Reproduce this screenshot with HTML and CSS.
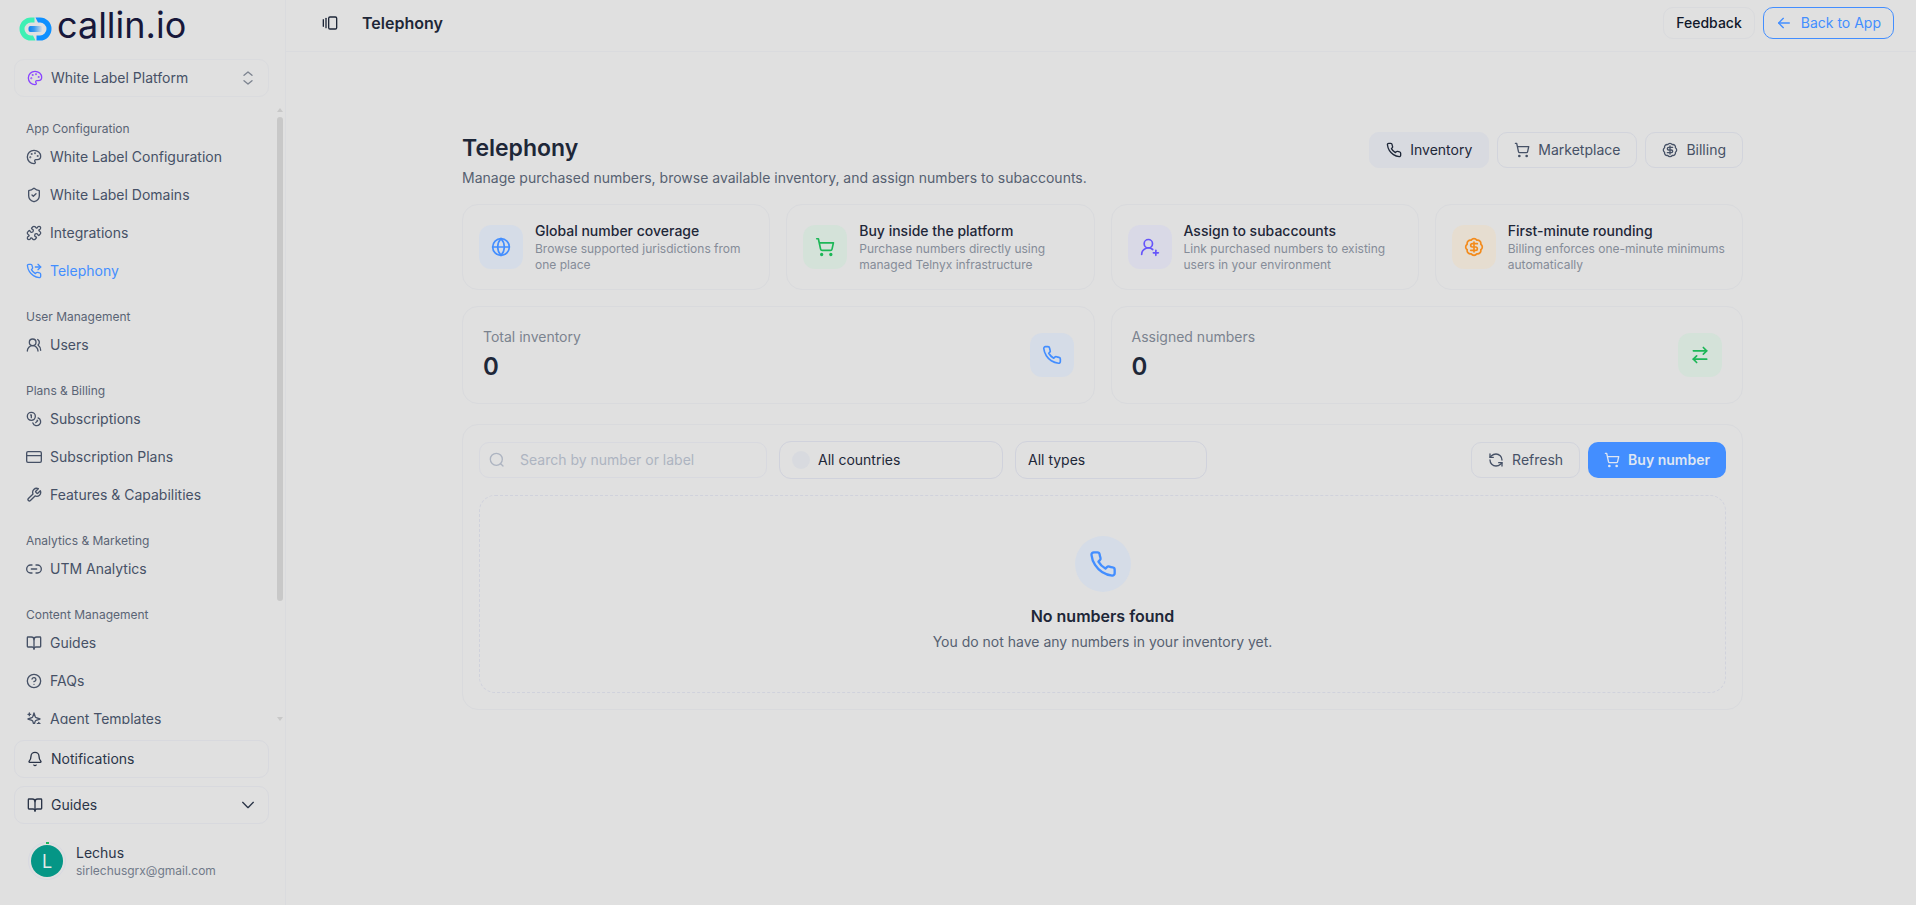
FILE: index.html
```html
<!DOCTYPE html>
<html lang="en">
<head>
    <meta charset="UTF-8">
    <meta name="viewport" content="width=device-width, initial-scale=1.0">
    <title>Telephony - callin.io</title>
    <link rel="stylesheet" href="styles.css">
</head>
<body>

<!-- Icon set -->
<svg class="sprite" aria-hidden="true">
    <symbol id="i-palette" viewBox="0 0 24 24"><path d="M12 22a1 1 0 0 1 0-20 10 9 0 0 1 10 9 5 5 0 0 1-5 5h-2.25a1.75 1.75 0 0 0-1.4 2.8l.3.4a1.75 1.75 0 0 1-1.4 2.8z"/><circle cx="13.5" cy="6.5" r=".5"/><circle cx="17.5" cy="10.5" r=".5"/><circle cx="6.5" cy="12.5" r=".5"/><circle cx="8.5" cy="7.5" r=".5"/></symbol>
    <symbol id="i-updown" viewBox="0 0 24 24"><path d="m6 16 6 5 6-5"/><path d="m6 8 6-5 6 5"/></symbol>
    <symbol id="i-shield" viewBox="0 0 24 24"><path d="M20 13c0 5-3.5 7.5-7.66 8.95a1 1 0 0 1-.67-.01C7.5 20.5 4 18 4 13V6a1 1 0 0 1 1-1c2 0 4.5-1.2 6.24-2.72a1.17 1.17 0 0 1 1.52 0C14.51 3.81 17 5 19 5a1 1 0 0 1 1 1z"/><path d="m9 12 2 2 4-4"/></symbol>
    <symbol id="i-puzzle" viewBox="0 0 24 24"><path d="M15.39 4.39a1 1 0 0 0 1.68-.474 2.5 2.5 0 1 1 3.014 3.015 1 1 0 0 0-.474 1.68l1.683 1.682a2.414 2.414 0 0 1 0 3.414L19.61 15.39a1 1 0 0 1-1.68-.474 2.5 2.5 0 1 0-3.014 3.015 1 1 0 0 1 .474 1.68l-1.683 1.682a2.414 2.414 0 0 1-3.414 0L8.61 19.61a1 1 0 0 0-1.68.474 2.5 2.5 0 1 1-3.014-3.015 1 1 0 0 0 .474-1.68l-1.683-1.682a2.414 2.414 0 0 1 0-3.414L4.39 8.61a1 1 0 0 1 1.68.474 2.5 2.5 0 1 0 3.014-3.015 1 1 0 0 1-.474-1.68l1.683-1.682a2.414 2.414 0 0 1 3.414 0z"/></symbol>
    <symbol id="i-phone" viewBox="0 0 24 24"><path d="M22 16.92v3a2 2 0 0 1-2.18 2 19.79 19.79 0 0 1-8.63-3.07 19.5 19.5 0 0 1-6-6 19.79 19.79 0 0 1-3.07-8.67A2 2 0 0 1 4.11 2h3a2 2 0 0 1 2 1.72 12.84 12.84 0 0 0 .7 2.81 2 2 0 0 1-.45 2.11L8.09 9.91a16 16 0 0 0 6 6l1.27-1.27a2 2 0 0 1 2.11-.45 12.84 12.84 0 0 0 2.81.7A2 2 0 0 1 22 16.92z"/></symbol>
    <symbol id="i-forward" viewBox="0 0 24 24"><path d="m18 2 4 4-4 4"/><path d="M14 6h8"/><path d="M22 16.92v3a2 2 0 0 1-2.18 2 19.79 19.79 0 0 1-8.63-3.07 19.5 19.5 0 0 1-6-6 19.79 19.79 0 0 1-3.07-8.67A2 2 0 0 1 4.11 2h3a2 2 0 0 1 2 1.72 12.84 12.84 0 0 0 .7 2.81 2 2 0 0 1-.45 2.11L8.09 9.91a16 16 0 0 0 6 6l1.27-1.27a2 2 0 0 1 2.11-.45 12.84 12.84 0 0 0 2.81.7A2 2 0 0 1 22 16.92z"/></symbol>
    <symbol id="i-users" viewBox="0 0 24 24"><path d="M18 21a8 8 0 0 0-16 0"/><circle cx="10" cy="8" r="5"/><path d="M22 20c0-3.37-2-6.5-4-8a5 5 0 0 0-.45-8.3"/></symbol>
    <symbol id="i-coins" viewBox="0 0 24 24"><circle cx="8" cy="8" r="6"/><path d="M18.09 10.37A6 6 0 1 1 10.34 18"/><path d="M7 6h1v4"/><path d="m16.71 13.88.7.71-2.82 2.82"/></symbol>
    <symbol id="i-card" viewBox="0 0 24 24"><rect x="1" y="4" width="22" height="16" rx="2"/><path d="M1 10h22"/></symbol>
    <symbol id="i-wrench" viewBox="0 0 24 24"><path d="M14.7 6.3a1 1 0 0 0 0 1.4l1.6 1.6a1 1 0 0 0 1.4 0l3.77-3.77a6 6 0 0 1-7.94 7.94l-6.91 6.91a2.12 2.12 0 0 1-3-3l6.91-6.91a6 6 0 0 1 7.94-7.94l-3.76 3.76z"/></symbol>
    <symbol id="i-link" viewBox="0 0 24 24"><path d="M9 18H7A5 5 0 0 1 7 6h2"/><path d="M15 6h2a5 5 0 1 1 0 12h-2"/><path d="M8 12h8"/></symbol>
    <symbol id="i-book" viewBox="0 0 24 24"><path d="M12 7v14"/><path d="M3 18a1 1 0 0 1-1-1V4a1 1 0 0 1 1-1h5a4 4 0 0 1 4 4 4 4 0 0 1 4-4h5a1 1 0 0 1 1 1v13a1 1 0 0 1-1 1h-6a3 3 0 0 0-3 3 3 3 0 0 0-3-3z"/></symbol>
    <symbol id="i-help" viewBox="0 0 24 24"><circle cx="12" cy="12" r="10"/><path d="M9.09 9a3 3 0 0 1 5.83 1c0 2-3 3-3 3"/><path d="M12 17h.01"/></symbol>
    <symbol id="i-sparkles" viewBox="0 0 24 24"><path d="m12 3-1.9 5.8a2 2 0 0 1-1.3 1.3L3 12l5.8 1.9a2 2 0 0 1 1.3 1.3L12 21l1.9-5.8a2 2 0 0 1 1.3-1.3L21 12l-5.8-1.9a2 2 0 0 1-1.3-1.3z"/><path d="M5 3v4"/><path d="M19 17v4"/><path d="M3 5h4"/><path d="M17 19h4"/></symbol>
    <symbol id="i-bell" viewBox="0 0 24 24"><path d="M10.27 21a2 2 0 0 0 3.46 0"/><path d="M3.26 15.33A1 1 0 0 0 4 17h16a1 1 0 0 0 .74-1.67C19.41 13.96 18 12.5 18 8A6 6 0 0 0 6 8c0 4.5-1.41 5.96-2.74 7.33"/></symbol>
    <symbol id="i-down" viewBox="0 0 24 24"><path d="m4 8 8 8 8-8"/></symbol>
    <symbol id="i-toggle" viewBox="0 0 24 24"><path d="M2 7v10"/><path d="M6 5v14"/><rect x="10" y="3" width="12" height="18" rx="2"/></symbol>
    <symbol id="i-back" viewBox="0 0 24 24"><path d="m11 19-7-7 7-7"/><path d="M20 12H4"/></symbol>
    <symbol id="i-cart" viewBox="0 0 24 24"><circle cx="8" cy="21" r="1"/><circle cx="19" cy="21" r="1"/><path d="M2.05 2.05h2l2.66 12.42a2 2 0 0 0 2 1.58h9.78a2 2 0 0 0 1.95-1.57l1.65-7.43H5.12"/></symbol>
    <symbol id="i-dollar" viewBox="0 0 24 24"><path d="M3.85 8.62a4 4 0 0 1 4.78-4.77 4 4 0 0 1 6.74 0 4 4 0 0 1 4.78 4.78 4 4 0 0 1 0 6.74 4 4 0 0 1-4.77 4.78 4 4 0 0 1-6.75 0 4 4 0 0 1-4.78-4.77 4 4 0 0 1 0-6.76z"/><path d="M16 8h-6a2 2 0 1 0 0 4h4a2 2 0 1 1 0 4H8"/><path d="M12 18V6"/></symbol>
    <symbol id="i-globe" viewBox="0 0 24 24"><circle cx="12" cy="12" r="10"/><path d="M12 2a14.5 14.5 0 0 0 0 20 14.5 14.5 0 0 0 0-20"/><path d="M2 12h20"/></symbol>
    <symbol id="i-userplus" viewBox="0 0 24 24"><path d="M2 21a8 8 0 0 1 13.29-6"/><circle cx="10" cy="8" r="5"/><path d="M19 16v6"/><path d="M22 19h-6"/></symbol>
    <symbol id="i-swap" viewBox="0 0 24 24"><path d="m16 3 4 4-4 4"/><path d="M20 7H4"/><path d="m8 21-4-4 4-4"/><path d="M4 17h16"/></symbol>
    <symbol id="i-search" viewBox="0 0 24 24"><circle cx="11" cy="11" r="9"/><path d="m21 21-3.5-3.5"/></symbol>
    <symbol id="i-refresh" viewBox="0 0 24 24"><path d="M21 12a9 9 0 0 0-9-9 9.75 9.75 0 0 0-6.74 2.74L3 8"/><path d="M3 3v5h5"/><path d="M3 12a9 9 0 0 0 9 9 9.75 9.75 0 0 0 6.74-2.74L21 16"/><path d="M16 16h5v5"/></symbol>
</svg>

<div class="app">
    <aside class="sidebar">
        <a class="logo" href="#">
            <svg class="logo-mark" viewBox="0 0 32 24" aria-hidden="true">
                <defs>
                    <linearGradient id="bar" x1="0" x2="1">
                        <stop offset="0" stop-color="#0b84f0"/>
                        <stop offset=".4" stop-color="#3a9af0"/>
                        <stop offset="1" stop-color="#dce0e4"/>
                    </linearGradient>
                </defs>
                <path d="M15 .5h-3.500a11.500 11.500 0 0 0 0 23H16l-2.500-5h-2a6.500 6.500 0 0 1 0-13H15z" fill="#3ef0b4"/>
                <path d="M16 .5h4.500a11.500 11.500 0 0 1 0 23H17v-5h3.500a6.500 6.500 0 0 0 0-13h-2z" fill="#0e90ff"/>
                <rect x="9" y="9" width="14" height="6" rx="2" fill="url(#bar)"/>
            </svg>
            <span>callin.io</span>
        </a>

        <button class="side-box switcher" type="button">
            <svg class="icon purple"><use href="#i-palette"/></svg>
            <span>White Label Platform</span>
            <svg class="icon end"><use href="#i-updown"/></svg>
        </button>

        <div class="nav-wrap">
            <nav class="nav">
                <h2>App Configuration</h2>
                <a href="#"><svg class="icon"><use href="#i-palette"/></svg>White Label Configuration</a>
                <a href="#"><svg class="icon"><use href="#i-shield"/></svg>White Label Domains</a>
                <a href="#"><svg class="icon"><use href="#i-puzzle"/></svg>Integrations</a>
                <a href="#" class="active"><svg class="icon"><use href="#i-forward"/></svg>Telephony</a>
                <h2>User Management</h2>
                <a href="#"><svg class="icon"><use href="#i-users"/></svg>Users</a>
                <h2>Plans &amp; Billing</h2>
                <a href="#"><svg class="icon"><use href="#i-coins"/></svg>Subscriptions</a>
                <a href="#"><svg class="icon"><use href="#i-card"/></svg>Subscription Plans</a>
                <a href="#"><svg class="icon"><use href="#i-wrench"/></svg>Features &amp; Capabilities</a>
                <h2>Analytics &amp; Marketing</h2>
                <a href="#"><svg class="icon"><use href="#i-link"/></svg>UTM Analytics</a>
                <h2>Content Management</h2>
                <a href="#"><svg class="icon"><use href="#i-book"/></svg>Guides</a>
                <a href="#"><svg class="icon"><use href="#i-help"/></svg>FAQs</a>
                <a href="#"><svg class="icon"><use href="#i-sparkles"/></svg>Agent Templates</a>
            </nav>
            <div class="scroll" aria-hidden="true">
                <span class="arrow-up"></span>
                <span class="thumb"></span>
                <span class="arrow-down"></span>
            </div>
        </div>

        <div class="side-bottom">
            <button class="side-box" type="button">
                <svg class="icon"><use href="#i-bell"/></svg>
                <span>Notifications</span>
            </button>
            <button class="side-box" type="button">
                <svg class="icon"><use href="#i-book"/></svg>
                <span>Guides</span>
                <svg class="icon end"><use href="#i-down"/></svg>
            </button>
        </div>

        <div class="profile">
            <div class="ring"><div class="avatar">L</div></div>
            <div>
                <div class="name">Lechus</div>
                <div class="email">sirlechusgrx@gmail.com</div>
            </div>
        </div>
    </aside>

    <div class="main">
        <header class="topbar">
            <button class="toggle" type="button" aria-label="Toggle sidebar"><svg class="icon"><use href="#i-toggle"/></svg></button>
            <span class="page-name">Telephony</span>
            <div class="top-actions">
                <button class="feedback" type="button">Feedback</button>
                <a class="back" href="#"><svg class="icon"><use href="#i-back"/></svg>Back to App</a>
            </div>
        </header>

        <main class="content">
            <div class="heading">
                <div>
                    <h1>Telephony</h1>
                    <p>Manage purchased numbers, browse available inventory, and assign numbers to subaccounts.</p>
                </div>
                <div class="tabs">
                    <button class="btn selected" type="button"><svg class="icon"><use href="#i-phone"/></svg>Inventory</button>
                    <button class="btn" type="button"><svg class="icon"><use href="#i-cart"/></svg>Marketplace</button>
                    <button class="btn" type="button"><svg class="icon"><use href="#i-dollar"/></svg>Billing</button>
                </div>
            </div>

            <section class="features">
                <article class="card feature">
                    <div class="tile blue"><svg class="icon"><use href="#i-globe"/></svg></div>
                    <div><h3>Global number coverage</h3><p>Browse supported jurisdictions from one place</p></div>
                </article>
                <article class="card feature">
                    <div class="tile green"><svg class="icon"><use href="#i-cart"/></svg></div>
                    <div><h3>Buy inside the platform</h3><p>Purchase numbers directly using managed Telnyx infrastructure</p></div>
                </article>
                <article class="card feature">
                    <div class="tile violet"><svg class="icon"><use href="#i-userplus"/></svg></div>
                    <div><h3>Assign to subaccounts</h3><p>Link purchased numbers to existing users in your environment</p></div>
                </article>
                <article class="card feature">
                    <div class="tile orange"><svg class="icon"><use href="#i-dollar"/></svg></div>
                    <div><h3>First-minute rounding</h3><p>Billing enforces one-minute minimums automatically</p></div>
                </article>
            </section>

            <section class="stats">
                <article class="card stat">
                    <div><p>Total inventory</p><strong>0</strong></div>
                    <div class="tile blue"><svg class="icon"><use href="#i-phone"/></svg></div>
                </article>
                <article class="card stat">
                    <div><p>Assigned numbers</p><strong>0</strong></div>
                    <div class="tile green"><svg class="icon"><use href="#i-swap"/></svg></div>
                </article>
            </section>

            <section class="card panel">
                <div class="toolbar">
                    <label class="search">
                        <svg class="icon"><use href="#i-search"/></svg>
                        <input type="text" placeholder="Search by number or label" aria-label="Search by number or label">
                    </label>
                    <label class="select countries">
                        <span class="flag"></span>
                        <select aria-label="Country"><option>All countries</option></select>
                    </label>
                    <label class="select types">
                        <select aria-label="Number type"><option>All types</option></select>
                    </label>
                    <div class="toolbar-actions">
                        <button class="btn" type="button"><svg class="icon"><use href="#i-refresh"/></svg>Refresh</button>
                        <button class="btn primary" type="button"><svg class="icon"><use href="#i-cart"/></svg>Buy number</button>
                    </div>
                </div>
                <div class="empty">
                    <div class="bubble"><svg class="icon"><use href="#i-phone"/></svg></div>
                    <h3>No numbers found</h3>
                    <p>You do not have any numbers in your inventory yet.</p>
                </div>
            </section>
        </main>
    </div>
</div>

</body>
</html>
```
FILE: styles.css
```css
* {
    box-sizing: border-box;
}
body {
    margin: 0;
    background: #e0e0e0;
    color: #1e2738;
    font-family: Inter, "Liberation Sans", sans-serif;
    font-size: 14px;
    line-height: 20px;
}
h1, h2, h3, p {
    margin: 0;
}
button, input, select {
    font: inherit;
    color: inherit;
    background: none;
    border: 0;
    margin: 0;
    padding: 0;
}
button {
    cursor: pointer;
}
a {
    color: inherit;
    text-decoration: none;
}
.sprite {
    display: none;
}
.icon {
    width: 16px;
    height: 16px;
    flex: none;
    fill: none;
    stroke: currentColor;
    stroke-width: 2;
    stroke-linecap: round;
    stroke-linejoin: round;
}
.app {
    display: flex;
    height: 100vh;
}

/* Sidebar */
.sidebar {
    width: 286px;
    flex: none;
    display: flex;
    flex-direction: column;
    border-right: 1px solid #dadbde;
}
.logo {
    display: flex;
    align-items: center;
    gap: 5px;
    height: 51px;
    margin-bottom: 8px;
    padding-left: 19px;
    color: #17173a;
    font-size: 36px;
    font-weight: 400;
    line-height: 51px;
}
.logo-mark {
    width: 33px;
    height: 24px;
    margin-top: 7px;
}
.side-box {
    display: flex;
    align-items: center;
    gap: 8px;
    height: 38px;
    margin: 0 16px 0 14px;
    padding: 0 12px;
    border: 1px solid #d8d9de;
    border-radius: 10px;
    color: #2b3548;
    text-align: left;
}
.side-box .end {
    margin-left: auto;
}
.switcher {
    flex: none;
    border-color: #dadbde;
    color: #465166;
}
.switcher .end {
    color: #7d8490;
}
.switcher .purple {
    color: #8a45ff;
}
.nav-wrap {
    display: flex;
    flex: 1;
    min-height: 0;
    margin: 5px 2px 0 14px;
}
.nav {
    flex: 1;
    overflow: hidden;
    padding-left: 12px;
    color: #465166;
}
.nav h2 {
    padding-top: 18px;
    color: #5a6475;
    font-size: 12px;
    font-weight: 400;
    line-height: 18px;
}
.nav a {
    display: flex;
    align-items: center;
    gap: 8px;
    height: 38px;
}
.nav .active {
    color: #438eff;
}
.scroll {
    display: flex;
    flex-direction: column;
    gap: 5px;
    width: 6px;
    padding: 6px 0 3px;
}
.arrow-up, .arrow-down {
    border: 3px solid transparent;
    border-top: 0;
    border-bottom: 4px solid #c8c8c8;
}
.arrow-down {
    margin-top: auto;
    border-top: 4px solid #c8c8c8;
    border-bottom: 0;
}
.thumb {
    height: 79%;
    border-radius: 3px;
    background: #c8c8c8;
}
.side-bottom {
    display: flex;
    flex-direction: column;
    gap: 8px;
    padding-top: 16px;
}
.profile {
    display: flex;
    align-items: center;
    gap: 10px;
    padding: 18px 28px 25px;
}
.ring {
    display: flex;
    position: relative;
    padding: 2px;
    border: 1px solid #d8d9e2;
    border-radius: 50%;
}
.ring::before {
    content: "";
    position: absolute;
    top: -1px;
    left: 50%;
    width: 3px;
    height: 2px;
    margin-left: -1px;
    background: #1fb85a;
}
.avatar {
    width: 32px;
    height: 32px;
    border-radius: 50%;
    background: #059686;
    color: #dfe8e6;
    font-size: 18px;
    line-height: 33px;
    text-align: center;
}
.name {
    color: #2b3548;
}
.email {
    color: #717a89;
    font-size: 12px;
    line-height: 16px;
}

/* Top bar */
.main {
    flex: 1;
    min-width: 0;
}
.topbar {
    display: flex;
    align-items: center;
    height: 52px;
    padding: 0 22px 6px 36px;
    border-bottom: 1px solid #dadbde;
}
.toggle {
    display: flex;
    margin-right: 24px;
}
.page-name {
    font-size: 16px;
    font-weight: 600;
}
.top-actions {
    display: flex;
    gap: 8px;
    margin-left: auto;
}
.feedback, .back {
    display: flex;
    align-items: center;
    height: 32px;
    padding: 0 12px;
    border: 1px solid #d9dadd;
    border-radius: 10px;
    color: #10182a;
    font-weight: 500;
}
.back {
    gap: 9px;
    border-color: #438eff;
    color: #438eff;
    font-weight: 400;
}

/* Content */
.content {
    max-width: 1328px;
    margin: 0 auto;
    padding: 80px 22px 24px 25px;
}
.heading {
    display: flex;
    justify-content: space-between;
    align-items: flex-start;
    margin-bottom: 16px;
}
.heading h1 {
    font-size: 23px;
    font-weight: 600;
    line-height: 32px;
}
.heading p {
    margin-top: 4px;
    color: #566071;
}
.tabs, .toolbar-actions {
    display: flex;
    gap: 8px;
}
.btn {
    display: flex;
    align-items: center;
    gap: 8px;
    height: 36px;
    padding: 0 16px;
    border: 1px solid #d2d4dc;
    border-radius: 10px;
    color: #465166;
}
.btn.selected {
    background: #d8dae0;
    border-color: #d8dae0;
    color: #1e2738;
}
.btn.primary {
    background: #438eff;
    border: 0;
    color: #dfe6f2;
    font-weight: 600;
}
.card {
    border: 1px solid #d9dadd;
    border-radius: 16px;
}
.features {
    display: grid;
    grid-template-columns: repeat(4, 1fr);
    gap: 16px;
}
.feature {
    display: flex;
    align-items: center;
    gap: 12px;
    padding: 16px;
}
.feature h3 {
    font-size: 14px;
    font-weight: 500;
}
.feature p {
    color: #858c98;
    font-size: 12px;
    line-height: 16px;
}
.tile {
    display: flex;
    align-items: center;
    justify-content: center;
    flex: none;
    width: 44px;
    height: 44px;
    border-radius: 12px;
}
.tile .icon {
    width: 20px;
    height: 20px;
}
.blue {
    background: #d5dce7;
    color: #438eff;
}
.green {
    background: #d4e2d9;
    color: #1cb757;
}
.violet {
    background: #d9d9e6;
    color: #6655fa;
}
.orange {
    background: #e6ddd0;
    color: #f38b1c;
}
.stats {
    display: grid;
    grid-template-columns: repeat(2, 1fr);
    gap: 16px;
    margin: 16px 0 20px;
}
.stat {
    display: flex;
    align-items: center;
    justify-content: space-between;
    padding: 20px;
}
.stat p {
    color: #7b838f;
}
.stat strong {
    display: block;
    margin-top: 4px;
    font-size: 24px;
    font-weight: 600;
    line-height: 32px;
}
.panel {
    padding: 16px;
}
.toolbar {
    display: flex;
    align-items: center;
    gap: 12px;
    margin-bottom: 16px;
}
.toolbar-actions {
    margin-left: auto;
}
.search {
    display: flex;
    align-items: center;
    gap: 15px;
    width: 288px;
    height: 36px;
    padding: 0 9px;
    border: 1px solid #d8d9df;
    border-radius: 10px;
    color: #adb4c1;
}
.search input {
    flex: 1;
    min-width: 0;
    outline: 0;
}
.search input::placeholder {
    color: #adb4c1;
}
.select {
    display: flex;
    align-items: center;
    gap: 8px;
    height: 38px;
    padding: 0 12px;
    border: 1px solid #d0d2dc;
    border-radius: 12px;
}
.select select {
    flex: 1;
    appearance: none;
    outline: 0;
}
.countries {
    width: 224px;
}
.types {
    width: 192px;
}
.flag {
    width: 18px;
    height: 18px;
    border-radius: 50%;
    background: #d8dadf;
}
.empty {
    display: flex;
    flex-direction: column;
    align-items: center;
    padding: 40px;
    border: 1px dashed #d0d2dc;
    border-radius: 16px;
}
.bubble {
    display: flex;
    align-items: center;
    justify-content: center;
    width: 56px;
    height: 56px;
    margin-bottom: 12px;
    border-radius: 50%;
    background: #d5dce7;
    color: #438eff;
}
.bubble .icon {
    width: 28px;
    height: 28px;
}
.empty h3 {
    font-size: 16px;
    font-weight: 600;
    line-height: 24px;
}
.empty p {
    margin-top: 4px;
    color: #566071;
}
```
